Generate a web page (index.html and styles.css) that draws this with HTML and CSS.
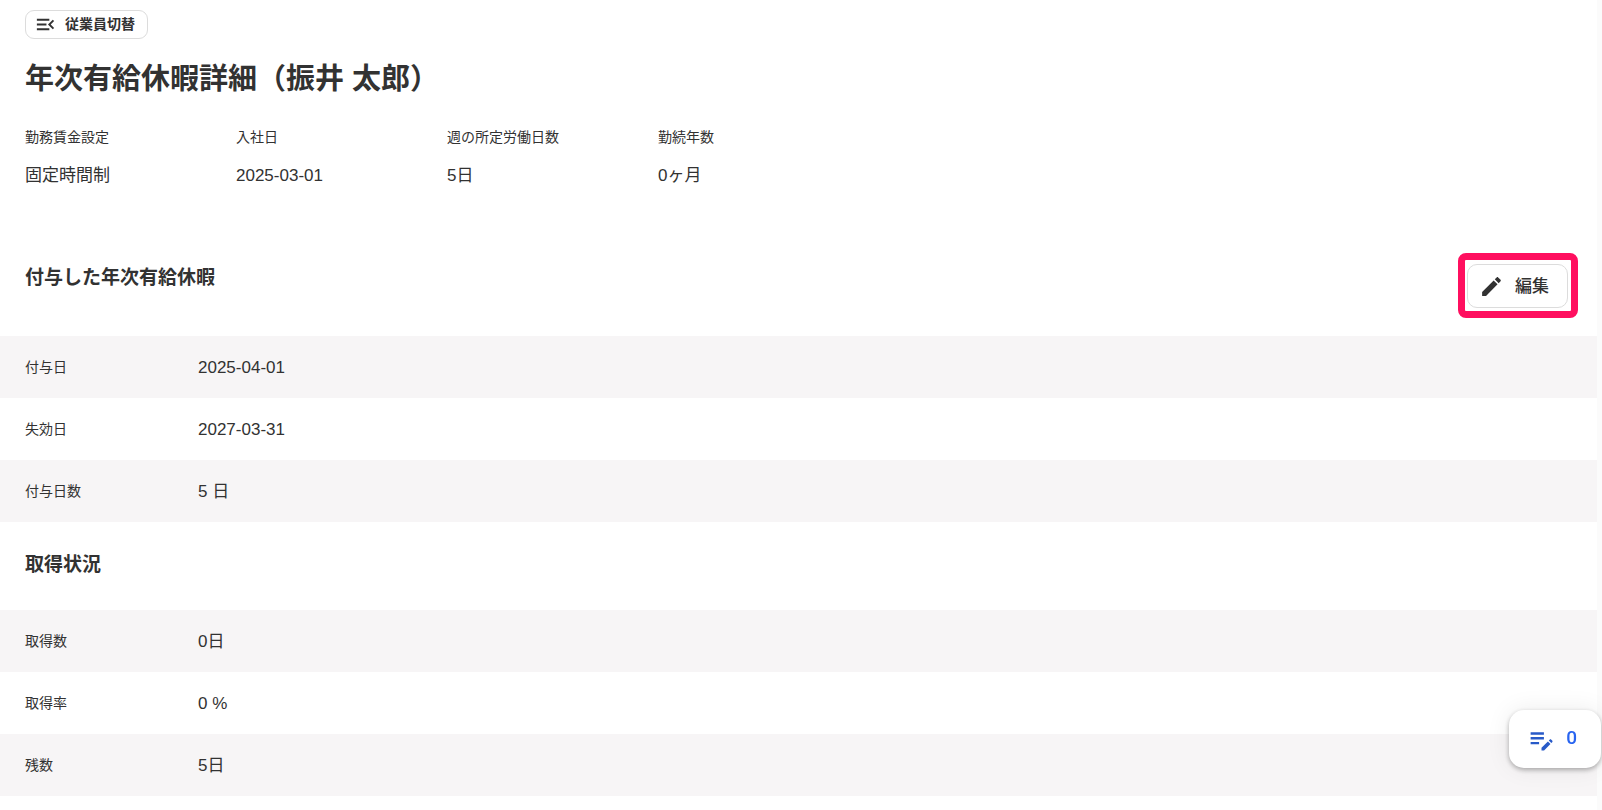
FILE: index.html
```html
<!DOCTYPE html>
<html lang="ja">
<head>
    <meta charset="UTF-8">
    <meta name="viewport" content="width=device-width, initial-scale=1.0">
    <title>年次有給休暇詳細</title>
    <link rel="stylesheet" href="styles.css">
</head>
<body>
    <main class="page">
        <!-- Page header -->
        <header class="page-header">
            <button type="button" class="btn btn-small">
                <svg class="icon-menu" viewBox="0 0 24 24" aria-hidden="true">
                    <path d="M3 18h13v-2H3v2zm0-5h10v-2H3v2zm0-7v2h13V6H3zm18 9.59L17.42 12 21 8.41 19.59 7l-5 5 5 5L21 15.59z"/>
                </svg>
                <span>従業員切替</span>
            </button>
            <h1>年次有給休暇詳細（振井 太郎）</h1>
        </header>

        <!-- Employee summary -->
        <dl class="summary">
            <div>
                <dt>勤務賃金設定</dt>
                <dd>固定時間制</dd>
            </div>
            <div>
                <dt>入社日</dt>
                <dd>2025-03-01</dd>
            </div>
            <div>
                <dt>週の所定労働日数</dt>
                <dd>5日</dd>
            </div>
            <div>
                <dt>勤続年数</dt>
                <dd>0ヶ月</dd>
            </div>
        </dl>

        <!-- Granted leave -->
        <section>
            <div class="section-header with-action">
                <h2>付与した年次有給休暇</h2>
                <div class="highlight">
                    <button type="button" class="btn btn-edit">
                        <svg class="icon-edit" viewBox="0 0 24 24" aria-hidden="true">
                            <path d="M3 17.25V21h3.75L17.81 9.94l-3.75-3.75L3 17.25zM20.71 7.04c.39-.39.39-1.02 0-1.41l-2.34-2.34c-.39-.39-1.02-.39-1.41 0l-1.83 1.83 3.75 3.75 1.83-1.83z"/>
                        </svg>
                        <span>編集</span>
                    </button>
                </div>
            </div>
            <table class="detail-table">
                <tr><th scope="row">付与日</th><td>2025-04-01</td></tr>
                <tr><th scope="row">失効日</th><td>2027-03-31</td></tr>
                <tr><th scope="row">付与日数</th><td>5 日</td></tr>
            </table>
        </section>

        <!-- Usage -->
        <section>
            <div class="section-header">
                <h2>取得状況</h2>
            </div>
            <table class="detail-table">
                <tr><th scope="row">取得数</th><td>0日</td></tr>
                <tr><th scope="row">取得率</th><td>0 %</td></tr>
                <tr><th scope="row">残数</th><td>5日</td></tr>
            </table>
        </section>
    </main>

    <!-- Floating memo button -->
    <button type="button" class="memo-button" aria-label="メモ 0件">
        <svg class="icon-memo" viewBox="0 0 24 24" aria-hidden="true">
            <path d="M3 10h11v2H3v-2zm0-2h11V6H3v2zm0 8h7v-2H3v2zm15.01-3.13l.71-.71c.39-.39 1.02-.39 1.41 0l.71.71c.39.39.39 1.02 0 1.41l-.71.71-2.12-2.12zm-.71.71l-5.3 5.3V21h2.12l5.3-5.3-2.12-2.12z"/>
        </svg>
        <span>0</span>
    </button>
</body>
</html>
```
FILE: styles.css
```css
* {
    box-sizing: border-box;
}

body {
    margin: 0;
    padding-right: 5px;
    background-color: #fbfbfb;
    color: #323232;
    font-family: "Liberation Sans", "Noto Sans CJK JP", sans-serif;
    font-size: 17px;
    line-height: 24px;
}

.page {
    min-height: 100vh;
    padding-top: 10px;
    background-color: #fff;
}

/* Headings */
h1,
h2 {
    margin: 0;
    font-weight: bold;
}

h1 {
    margin-top: 18px;
    font-size: 29px;
    line-height: 44px;
}

h2 {
    font-size: 19px;
    line-height: 28px;
}

/* Buttons */
.btn {
    display: flex;
    align-items: center;
    border: 1px solid #dcdcdc;
    background-color: #fff;
    color: #323232;
    font-family: inherit;
    font-weight: 500;
    cursor: pointer;
}

.btn svg {
    flex: none;
    fill: #323232;
}

/* Keeps the label level with the icon */
.btn span,
.memo-button span {
    padding-bottom: 4px;
}

.btn-small {
    height: 29px;
    padding: 0 12px 0 8px;
    gap: 8px;
    border-radius: 9px;
    font-size: 14px;
    font-weight: bold;
}

.btn-edit {
    height: 44px;
    padding: 0 18px 0 11px;
    gap: 11px;
    border-radius: 10px;
    font-size: 17px;
}

.icon-menu {
    width: 23px;
    height: 23px;
}

.icon-edit {
    width: 25px;
    height: 25px;
}

.page-header {
    padding: 0 25px;
}

/* Employee summary */
.summary {
    display: grid;
    grid-template-columns: repeat(4, 211px);
    margin: 22px 0 0;
    padding: 0 25px;
}

.summary dt {
    font-size: 14px;
    line-height: 28px;
}

.summary dd {
    margin: 13px 0 0;
}

/* Sections */
.section-header {
    display: flex;
    align-items: flex-start;
    justify-content: space-between;
    padding: 29px 29px 31px 25px;
}

.with-action {
    margin-top: 47px;
}

/* Red frame around the edit button */
.highlight {
    position: relative;
    margin-bottom: -3px;
}

.highlight::after {
    content: "";
    position: absolute;
    inset: -11px -10px -10px -9px;
    border: 7px solid #ff0f5f;
    border-radius: 8px;
    pointer-events: none;
}

.detail-table {
    width: 100%;
    border-collapse: collapse;
}

.detail-table tr {
    height: 62px;
}

.detail-table tr:nth-child(odd) {
    background-color: #f7f5f6;
}

.detail-table th {
    width: 198px;
    padding: 0 0 0 25px;
    font-size: 14px;
    font-weight: normal;
    text-align: left;
}

.detail-table td {
    padding: 2px 0 0;
}

/* Floating memo button */
.memo-button {
    position: fixed;
    right: 1px;
    bottom: 42px;
    display: flex;
    align-items: center;
    gap: 10px;
    height: 58px;
    padding: 0 24px 0 18px;
    border: none;
    border-radius: 15px;
    background-color: #fff;
    box-shadow: 0 2px 5px rgba(0, 0, 0, 0.3), 0 0 24px rgba(0, 0, 0, 0.08);
    color: #2864f0;
    font-family: Roboto, sans-serif;
    font-size: 19px;
    font-weight: 500;
    cursor: pointer;
}

.icon-memo {
    width: 29px;
    height: 29px;
    fill: #285ac8;
}
```
